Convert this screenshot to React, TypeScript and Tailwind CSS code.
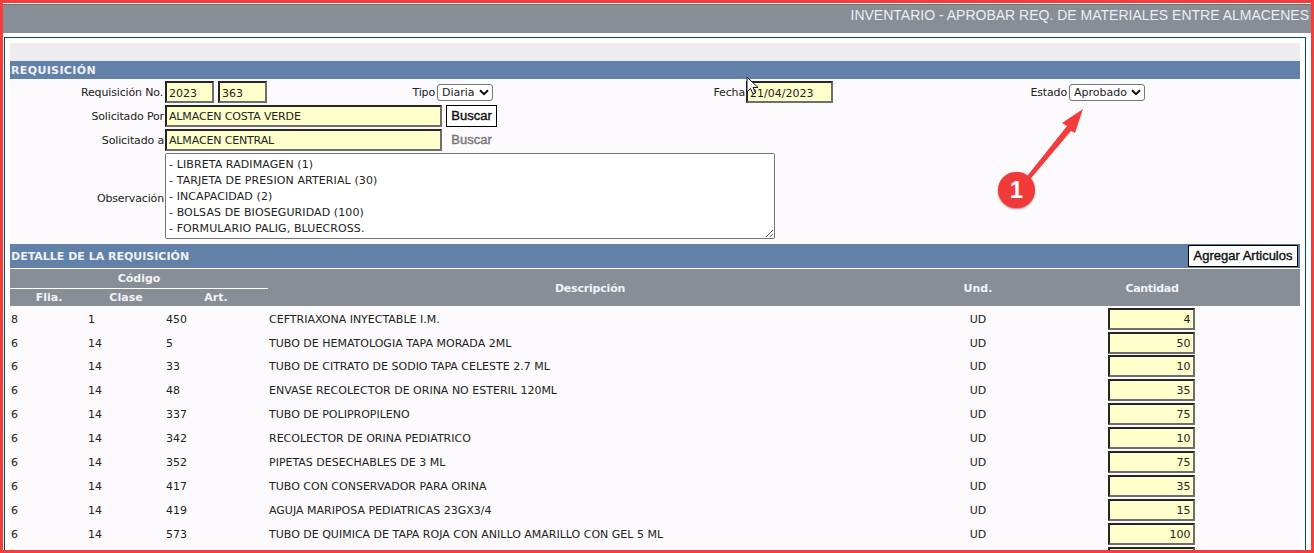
const rows = [
    ['8', '1', '450', 'CEFTRIAXONA INYECTABLE I.M.', 'UD', '4'],
    ['6', '14', '5', 'TUBO DE HEMATOLOGIA TAPA MORADA 2ML', 'UD', '50'],
    ['6', '14', '33', 'TUBO DE CITRATO DE SODIO TAPA CELESTE 2.7 ML', 'UD', '10'],
    ['6', '14', '48', 'ENVASE RECOLECTOR DE ORINA NO ESTERIL 120ML', 'UD', '35'],
    ['6', '14', '337', 'TUBO DE POLIPROPILENO', 'UD', '75'],
    ['6', '14', '342', 'RECOLECTOR DE ORINA PEDIATRICO', 'UD', '10'],
    ['6', '14', '352', 'PIPETAS DESECHABLES DE 3 ML', 'UD', '75'],
    ['6', '14', '417', 'TUBO CON CONSERVADOR PARA ORINA', 'UD', '35'],
    ['6', '14', '419', 'AGUJA MARIPOSA PEDIATRICAS 23GX3/4', 'UD', '15'],
    ['6', '14', '573', 'TUBO DE QUIMICA DE TAPA ROJA CON ANILLO AMARILLO CON GEL 5 ML', 'UD', '100'],
    ['', '', '', '', '', ''],
];

const observacion = `- LIBRETA RADIMAGEN (1)
- TARJETA DE PRESION ARTERIAL (30)
- INCAPACIDAD (2)
- BOLSAS DE BIOSEGURIDAD (100)
- FORMULARIO PALIG, BLUECROSS.`;

const Field = ({ value, className }: { value: string; className: string }) => {
    return <input
        readOnly
        value={value}
        className={`block h-[22px] bg-[#ffffcc] border-2 border-t-[#262626] border-l-[#262626] border-r-[#6e6e6e] border-b-[#6e6e6e] px-[2px] text-[11px] text-[#222] outline-none ${className}`}
    />;
};

const Label = ({ text, className }: { text: string; className: string }) => {
    return <span className={`block text-right text-[11px] leading-[24px] tracking-[-0.15px] text-[#222] ${className}`}>{text}</span>;
};

const Picker = ({ value, className }: { value: string; className: string }) => {
    return <span className={`flex h-[17px] items-center justify-between rounded-[3px] border border-[#767676] bg-white pl-1 pr-[3px] text-[11px] text-[#222] ${className}`}>
        <span className="pt-[2px]">{value}</span>
        <svg width="10" height="7" viewBox="0 0 10 7" fill="none" stroke="#111" strokeWidth="2">
            <path d="M1 1.2 L5 5.2 L9 1.2" />
        </svg>
    </span>;
};

const Band = ({ title, children, className }: { title: string; children?: React.ReactNode; className: string }) => {
    return <div className={`flex items-center justify-between bg-[#6281a9] text-[11px] font-bold text-[#eef1f5] pl-px ${className}`}>
        <span className="pt-[2px]">{title}</span>
        {children}
    </div>;
};

const Annotation = () => {
    return <div className="absolute left-[995px] top-[104px] w-[95px] h-[108px]">
        <svg width="95" height="108" viewBox="0 0 95 108" className="absolute inset-0">
            <path d="M88 5 L67 19 L72 22 L29 76 L32 79 L76 27 L80 29 Z" fill="#f33d3d" />
        </svg>
        <span className="absolute left-[3px] top-[68px] w-[37px] h-[36px] rounded-full bg-[#f03a3a] text-white text-center text-[24px] leading-[36px] font-bold shadow-[0_1px_2px_rgba(80,0,0,0.5)] [font-family:'Liberation_Sans',sans-serif]">1</span>
    </div>;
};

const Cursor = () => {
    return <svg width="14" height="20" viewBox="0 0 14 20" className="absolute left-[746px] top-[76px]">
        <path d="M1 1 L1 16 L4.5 12.5 L7 18 L9.5 17 L7 11.5 L12 11.5 Z" fill="#fff" stroke="#111" strokeWidth="1" />
    </svg>;
};

const App = () => {
    return <div className="relative w-[1314px] h-[553px] box-border overflow-hidden border-[3px] border-[#f33d3d] bg-white [font-family:'DejaVu_Sans',Verdana,sans-serif]">
        <header className="h-[29px] mt-px bg-[#878e96] border-t border-[#6c737a] pr-[2px] text-right text-[14px] leading-[21px] text-[#eceef0] [font-family:'Liberation_Sans',Arial,sans-serif]">
            INVENTARIO - APROBAR REQ. DE MATERIALES ENTRE ALMACENES
        </header>
        <main className="mt-1 ml-px mr-[5px] h-[600px] border border-[#00506b] pt-[5px] pl-[5px] pr-[5px]">
            <div className="h-[18px] bg-[#ededed]"></div>
            <Band title="REQUISICIÓN" className="h-[18px] tracking-[0.35px]" />
            <section className="bg-[#fcfafc] pt-[2px] pb-[5px]">
                <div className="flex h-[22px]">
                    <Label text="Requisición No." className="w-[155px] pr-[2px]" />
                    <Field value="2023" className="w-[49px] pt-[2px] pb-0" />
                    <Field value="363" className="w-[49px] ml-1 pt-[2px] pb-0" />
                    <Label text="Tipo" className="w-[170px] pr-[2px]" />
                    <span className="flex items-center"><Picker value="Diaria" className="w-[56px]" /></span>
                    <Label text="Fecha" className="w-[253px] pr-px" />
                    <Field value="21/04/2023" className="w-[87px] pt-[2px] pb-0" />
                    <Label text="Estado" className="w-[236px] pr-[2px]" />
                    <span className="flex items-center"><Picker value="Aprobado" className="w-[76px]" /></span>
                </div>
                <div className="flex h-[22px] mt-[2px]">
                    <Label text="Solicitado Por" className="w-[155px] pr-px" />
                    <Field value="ALMACEN COSTA VERDE" className="w-[277px] tracking-[-0.15px]" />
                    <button className="ml-1 w-[51px] border border-black bg-white text-[13px] text-[#111] [-webkit-text-stroke:0.4px] [font-family:'Liberation_Sans',Arial,sans-serif]">Buscar</button>
                </div>
                <div className="flex h-[22px] mt-[2px]">
                    <Label text="Solicitado a" className="w-[155px] pr-px" />
                    <Field value="ALMACEN CENTRAL" className="w-[277px] tracking-[-0.15px]" />
                    <span className="ml-1 w-[51px] text-center text-[13px] leading-[22px] text-[#777] [-webkit-text-stroke:0.4px] [font-family:'Liberation_Sans',Arial,sans-serif]">Buscar</span>
                </div>
                <div className="flex items-center h-[86px] mt-[2px]">
                    <Label text="Observación" className="w-[155px] pr-px pt-[6px]" />
                    <textarea
                        readOnly
                        value={observacion}
                        className="block w-[610px] h-[86px] rounded-[2px] border border-[#767676] bg-white px-[3px] py-[3px] text-[11px] leading-[16px] tracking-[0.1px] text-[#222] outline-none"
                    />
                </div>
            </section>
            <Band title="DETALLE DE LA REQUISICIÓN" className="h-[24px] pr-[2px]">
                <button className="h-[22px] w-[110px] border border-black bg-white text-[13px] font-normal text-[#111] [-webkit-text-stroke:0.4px] [font-family:'Liberation_Sans',Arial,sans-serif]">Agregar Articulos</button>
            </Band>
            <table className="mt-px w-[1290px] table-fixed border-collapse bg-[#fcfafc] text-[11px] leading-[18px] text-[#222]">
                <colgroup>
                    <col className="w-[78px]" />
                    <col className="w-[78px]" />
                    <col className="w-[102px]" />
                    <col className="w-[644px]" />
                    <col className="w-[132px]" />
                    <col className="w-[216px]" />
                    <col className="w-[40px]" />
                </colgroup>
                <thead className="bg-[#878e96] text-[#f1f3f5] font-bold text-center leading-[16px]">
                    <tr className="h-[19px]">
                        <th colSpan={3} className="border-b border-white font-bold pt-px">Código</th>
                        <th rowSpan={2} className="font-bold pt-[2px] tracking-[-0.2px]">Descripción</th>
                        <th rowSpan={2} className="font-bold pt-[2px]">Und.</th>
                        <th rowSpan={2} className="font-bold pt-[2px] tracking-[-0.3px]">Cantidad</th>
                        <th rowSpan={2}></th>
                    </tr>
                    <tr className="h-[18px]">
                        <th className="font-bold pt-px">Flia.</th>
                        <th className="font-bold pt-px pr-[2px]">Clase</th>
                        <th className="font-bold pt-px pr-[2px]">Art.</th>
                    </tr>
                </thead>
                <tbody>
                    {rows.map((r, i) => <tr key={i} className={i === 1 ? 'h-[23px]' : 'h-[24px]'}>
                        <td className="pl-px pt-[5px] align-top">{r[0]}</td>
                        <td className="pt-[5px] align-top">{r[1]}</td>
                        <td className="pt-[5px] align-top">{r[2]}</td>
                        <td className="pl-px pt-[5px] align-top">{r[3]}</td>
                        <td className="pt-[5px] align-top text-center">{r[4]}</td>
                        <td className="pt-[2px] pr-[2px] align-top">
                            <Field value={r[5]} className={i === 1 ? 'w-[87px] mx-auto -mb-px pt-px pb-0 text-right' : 'w-[87px] mx-auto pt-px pb-0 text-right'} />
                        </td>
                        <td></td>
                    </tr>)}
                </tbody>
            </table>
        </main>
        <div className="absolute -left-[3px] -top-[3px]">
            <Annotation />
            <Cursor />
        </div>
    </div>;
};

export default App;
